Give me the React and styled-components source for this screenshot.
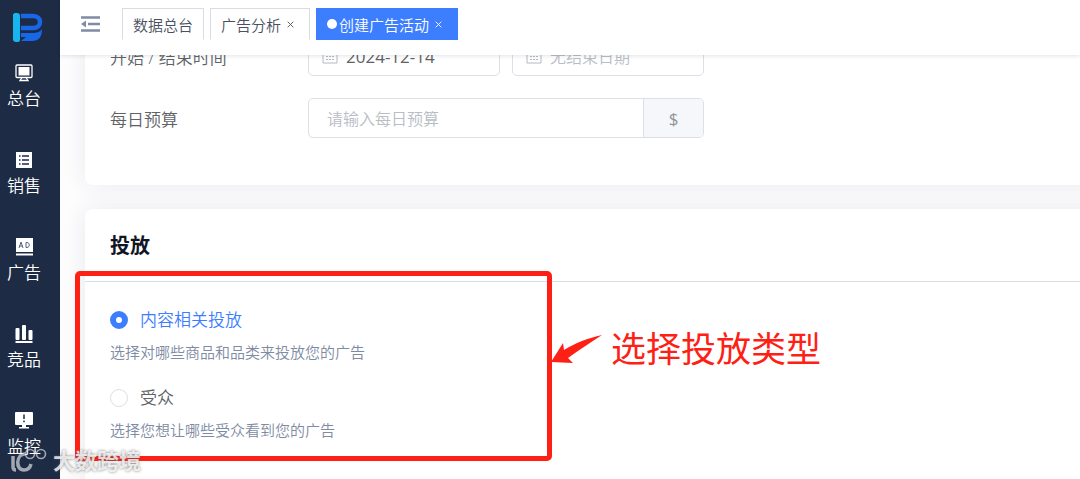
import React, { useState } from "react";
import styled, { createGlobalStyle } from "styled-components";

const GlobalStyle = createGlobalStyle`
    * {
        box-sizing: border-box;
    }

    body {
        margin: 0;
        overflow: hidden;
        color: #606266;
        background: #fff;
        font-family: "Open Sans", "Noto Sans CJK SC", sans-serif;
        font-weight: 350;
    }

    button,
    input {
        font-family: inherit;
    }
`;

const Layout = styled.div`
    position: relative;
    display: flex;
    height: 100vh;
    overflow: hidden;
`;

const Sidebar = styled.nav`
    flex: none;
    width: 60px;
    padding-top: 12px;
    background: #1d2b45;
`;

const Logo = styled.a`
    display: flex;
    justify-content: center;
    height: 52px;
    padding-right: 5px;
`;

const MenuItem = styled.a`
    display: flex;
    flex-direction: column;
    align-items: center;
    height: 87px;
    padding-right: 12px;
    gap: 4px;
    color: #fff;
    font-size: 17px;
    line-height: 26px;
    text-decoration: none;

    svg {
        display: block;
        flex: none;
    }
`;

const Main = styled.div`
    display: flex;
    flex-direction: column;
    flex: 1;
    min-width: 0;
`;

const TopBar = styled.header`
    position: relative;
    z-index: 1;
    display: flex;
    flex: none;
    height: 55px;
    padding: 8px 20px 0;
    background: #fff;
    box-shadow: 0 1px 4px rgba(0, 21, 41, 0.12);
`;

const CollapseButton = styled.button`
    display: flex;
    align-items: center;
    height: 32px;
    margin-right: 20px;
    padding: 0;
    border: 0;
    background: none;
`;

const Tabs = styled.div`
    display: flex;
    gap: 6px;
`;

const Tab = styled.div`
    display: flex;
    align-items: center;
    height: 32px;
    padding: 0 ${(props) => (props.$closable ? "15px" : "10px")} 0 10px;
    border: 1px solid ${(props) => (props.$active ? "#3d7eff" : "#d8dce5")};
    border-bottom-color: ${(props) => (props.$active ? "#3d7eff" : "#fff")};
    color: ${(props) => (props.$active ? "#fff" : "#495060")};
    background: ${(props) => (props.$active ? "#3d7eff" : "#fff")};
    font-size: 15px;
    white-space: nowrap;

    a {
        color: inherit;
        text-decoration: none;
    }
`;

const TabDot = styled.span`
    width: 10px;
    height: 10px;
    margin-right: 2px;
    border-radius: 50%;
    background: #fff;
`;

const TabClose = styled.button`
    display: flex;
    margin-left: 6px;
    padding: 0;
    border: 0;
    color: inherit;
    background: none;
`;

const Content = styled.main`
    display: flex;
    flex-direction: column;
    gap: 24px;
    flex: 1;
    min-height: 0;
    margin: -43px -30px 0 0;
    padding-left: 25px;
    background: #fdfdfe;
`;

const Card = styled.section`
    flex: none;
    border-radius: 8px;
    background: #fff;
    box-shadow: 0 0 24px rgba(29, 43, 69, 0.09);
`;

const SettingsForm = styled.div`
    display: flex;
    flex-direction: column;
    gap: 22px;
    padding: 24px 25px 47px;
`;

const FormRow = styled.div`
    display: flex;
    align-items: center;
`;

const FormLabel = styled.label`
    width: 198px;
    font-size: 17px;
`;

const FieldGroup = styled.div`
    display: flex;
    gap: 12px;
    width: 396px;
`;

const DateField = styled.div`
    display: flex;
    align-items: center;
    flex: 1;
    min-width: 0;
    gap: 8px;
    height: 40px;
    padding: 0 13px;
    border: 1px solid #dcdfe6;
    border-radius: 5px;

    svg {
        flex: none;
    }
`;

const TextInput = styled.input`
    flex: 1;
    min-width: 0;
    padding: 0;
    border: 0;
    outline: 0;
    color: #606266;
    background: none;
    font-size: 17px;
    font-weight: 400;

    &::placeholder {
        color: #b9bdc6;
        font-size: 16px;
        font-weight: 350;
    }
`;

const BudgetField = styled.div`
    display: flex;
    flex: 1;
    height: 40px;
    padding-left: 18px;
    border: 1px solid #dcdfe6;
    border-radius: 5px;
    overflow: hidden;
`;

const Currency = styled.span`
    display: flex;
    align-items: center;
    justify-content: center;
    width: 60px;
    border-left: 1px solid #dcdfe6;
    color: #909399;
    background: #f5f7fa;
    font-size: 17px;
    font-weight: 400;
`;

const CardHeader = styled.div`
    padding: 22px 25px 20px;
    border-bottom: 1px solid #d9dfe6;
`;

const CardTitle = styled.h2`
    margin: 0;
    color: #101624;
    font-size: 20px;
    line-height: 30px;
`;

const CardBody = styled.div`
    position: relative;
    display: flex;
    flex-direction: column;
    gap: 20px;
    padding: 24px 25px 60px;
`;

const Option = styled.div`
    display: flex;
    flex-direction: column;
    gap: 6px;
`;

const OptionLabel = styled.label`
    display: flex;
    align-items: center;
    gap: 12px;
    color: ${(props) => (props.$checked ? "#3d7eff" : "#606266")};
    font-size: 17px;
    line-height: 28px;
`;

const Radio = styled.input`
    appearance: none;
    width: 18px;
    height: 18px;
    margin: 0;
    border: 1px solid #dcdfe6;
    border-radius: 50%;
    background: #fff;

    &:checked {
        border: 6px solid #3d7eff;
    }
`;

const OptionHint = styled.p`
    margin: 0;
    color: #7e8ba3;
    font-size: 15px;
    line-height: 24px;
`;

const Highlight = styled.div`
    position: absolute;
    top: -11px;
    left: -10px;
    width: 477px;
    height: 190px;
    border: 5px solid #ff2015;
    border-radius: 5px;
    pointer-events: none;
`;

const Callout = styled.div`
    position: absolute;
    top: 40px;
    left: 466px;
    display: flex;
    align-items: center;
    gap: 8px;
    color: #ff2015;
    font-size: 35px;
    font-weight: 400;
    line-height: 54px;
    white-space: nowrap;
`;

const Watermark = styled.div`
    position: absolute;
    bottom: 4px;
    left: 9px;
    z-index: 2;
    display: flex;
    align-items: center;
    gap: 6px;
    color: rgba(255, 255, 255, 0.8);
    font-size: 22px;
    font-weight: 700;
    line-height: 30px;
    text-shadow: 0 0 3px rgba(90, 90, 90, 0.8);
    pointer-events: none;

    svg {
        opacity: 0.65;
    }
`;

const LogoIcon = () => (
    <svg width="31" height="32" viewBox="0 0 31 32">
        <path d="M9 4h12c5 0 7 3 7 6s-2 6-7 6H9" fill="none" stroke="#1767e8" strokeWidth="4.500" />
        <path d="M9 21h11c5 0 8-1 10-4 0 8-3 12-10 12H9l5-4H9z" fill="#1767e8" />
        <path d="M1 3c0-1 1-2 2-2h2c2 0 3 1 3 3v24c0 1-1 2-2 2H4c-2 0-3-1-3-3z" fill="#18b4ef" />
    </svg>
);

const DashboardIcon = () => (
    <svg width="18" height="18" viewBox="0 0 18 18">
        <rect x="1" y="1" width="16" height="12.500" rx="1" fill="none" stroke="#fff" strokeWidth="1.300" />
        <path d="M3.500 3h11v8.500h-11z" fill="#fff" />
        <path d="M7 13.500L5 16.500h8L11 13.500" fill="none" stroke="#fff" strokeWidth="1.300" />
    </svg>
);

const SalesIcon = () => (
    <svg width="18" height="18" viewBox="0 0 18 18">
        <path d="M1 1h16v16H1z" fill="#fff" />
        <path d="M4 5h1.500M7 5h7M4 9h1.500M7 9h7M4 13h1.500M7 13h7" stroke="#1d2b45" strokeWidth="1.300" />
    </svg>
);

const AdIcon = () => (
    <svg width="18" height="18" viewBox="0 0 18 18">
        <path d="M1 0h17v14H1zM1 15.500h17v2H1z" fill="#fff" />
        <path d="M4 10l2-6 2 6M4.600 8h2.800M11 4.500v5h1c3 0 3-5 0-5z" fill="none" stroke="#56617a" strokeWidth="1" />
    </svg>
);

const CompetitorIcon = () => (
    <svg width="18" height="18" viewBox="0 0 18 18">
        <rect x="0.500" y="3" width="4" height="12" rx="1" fill="#fff" />
        <rect x="7" y="0" width="4" height="15" rx="1" fill="#fff" />
        <rect x="13.500" y="5" width="4" height="10" rx="1" fill="#fff" />
        <path d="M0.500 16h17v2h-17z" fill="#fff" />
    </svg>
);

const MonitorIcon = () => (
    <svg width="18" height="18" viewBox="0 0 18 18">
        <path d="M1 0h16q1 0 1 1v11q0 1-1 1h-6v2h3v1.500H4V15h3v-2H1q-1 0-1-1V1q0-1 1-1z" fill="#fff" />
        <path d="M9 2.500v4.500M9 8.500v1.800" stroke="#1d2b45" strokeWidth="1.500" />
    </svg>
);

const CollapseIcon = () => (
    <svg width="22" height="18" viewBox="0 0 22 18">
        <path d="M1 2.500h19M8 9h12M1 15.500h19" stroke="#7f8ca4" strokeWidth="2.600" />
        <path d="M1 9l5-3.500v7z" fill="#7f8ca4" />
    </svg>
);

const CloseIcon = () => (
    <svg width="7" height="7" viewBox="0 0 7 7">
        <path d="M0.700 0.700l5.600 5.600M6.300 0.700L0.700 6.300" stroke="currentColor" strokeWidth="0.900" />
    </svg>
);

const CalendarIcon = () => (
    <svg width="16" height="16" viewBox="0 0 16 16" fill="none" stroke="#b4b8c1">
        <path d="M1 2.500h14v12.500H1zM1 6h14M4.500 0.500v3M11.500 0.500v3" />
        <path d="M4 8.500h2M7 8.500h2M10 8.500h2M4 11.500h2M7 11.500h2M10 11.500h2" />
    </svg>
);

const ArrowIcon = () => (
    <svg width="52" height="30" viewBox="0 0 52 30">
        <path d="M0 28L12 9l1 7C24 9 37 4 51 1 40 8 28 16 17 24l5 5z" fill="#ff2015" />
    </svg>
);

const WatermarkIcon = () => (
    <svg width="38" height="26" viewBox="0 0 38 26" fill="none" stroke="#e8eaee">
        <path d="M4 9v11q0 3 3 3" strokeWidth="3.500" />
        <path d="M16 7c-9 0-10 16-1 16 4 0 6-2 7-6" strokeWidth="3.500" />
        <circle cx="21" cy="7" r="4.500" strokeWidth="1.600" />
        <circle cx="32" cy="7" r="4.500" strokeWidth="1.600" />
    </svg>
);

const menu = [
    { name: "总台", icon: <DashboardIcon /> },
    { name: "销售", icon: <SalesIcon /> },
    { name: "广告", icon: <AdIcon /> },
    { name: "竞品", icon: <CompetitorIcon /> },
    { name: "监控", icon: <MonitorIcon /> },
];

const tabs = [
    { name: "数据总台" },
    { name: "广告分析", closable: true },
    { name: "创建广告活动", closable: true, active: true },
];

const options = [
    { id: "content", name: "内容相关投放", hint: "选择对哪些商品和品类来投放您的广告" },
    { id: "audience", name: "受众", hint: "选择您想让哪些受众看到您的广告" },
];

const App = () => {
    const [target, setTarget] = useState("content");

    return (
        <Layout>
            <GlobalStyle />
            <Sidebar>
                <Logo href="#">
                    <LogoIcon />
                </Logo>
                {menu.map((item) => (
                    <MenuItem key={item.name} href="#">
                        {item.icon}
                        {item.name}
                    </MenuItem>
                ))}
            </Sidebar>
            <Main>
                <TopBar>
                    <CollapseButton type="button">
                        <CollapseIcon />
                    </CollapseButton>
                    <Tabs>
                        {tabs.map((tab) => (
                            <Tab key={tab.name} $active={tab.active} $closable={tab.closable}>
                                {tab.active && <TabDot />}
                                <a href="#">{tab.name}</a>
                                {tab.closable && (
                                    <TabClose type="button">
                                        <CloseIcon />
                                    </TabClose>
                                )}
                            </Tab>
                        ))}
                    </Tabs>
                </TopBar>
                <Content>
                    <Card>
                        <SettingsForm>
                            <FormRow>
                                <FormLabel htmlFor="start-date">开始 / 结束时间</FormLabel>
                                <FieldGroup>
                                    <DateField>
                                        <CalendarIcon />
                                        <TextInput id="start-date" defaultValue="2024-12-14" />
                                    </DateField>
                                    <DateField>
                                        <CalendarIcon />
                                        <TextInput id="end-date" placeholder="无结束日期" />
                                    </DateField>
                                </FieldGroup>
                            </FormRow>
                            <FormRow>
                                <FormLabel htmlFor="budget">每日预算</FormLabel>
                                <FieldGroup>
                                    <BudgetField>
                                        <TextInput id="budget" placeholder="请输入每日预算" />
                                        <Currency>$</Currency>
                                    </BudgetField>
                                </FieldGroup>
                            </FormRow>
                        </SettingsForm>
                    </Card>
                    <Card>
                        <CardHeader>
                            <CardTitle>投放</CardTitle>
                        </CardHeader>
                        <CardBody>
                            {options.map((option) => (
                                <Option key={option.id}>
                                    <OptionLabel htmlFor={option.id} $checked={target === option.id}>
                                        <Radio
                                            type="radio"
                                            name="target"
                                            id={option.id}
                                            checked={target === option.id}
                                            onChange={() => setTarget(option.id)}
                                        />
                                        {option.name}
                                    </OptionLabel>
                                    <OptionHint>{option.hint}</OptionHint>
                                </Option>
                            ))}
                            <Highlight />
                            <Callout>
                                <ArrowIcon />
                                选择投放类型
                            </Callout>
                        </CardBody>
                    </Card>
                </Content>
            </Main>
            <Watermark>
                <WatermarkIcon />
                大数跨境
            </Watermark>
        </Layout>
    );
};

export default App;
